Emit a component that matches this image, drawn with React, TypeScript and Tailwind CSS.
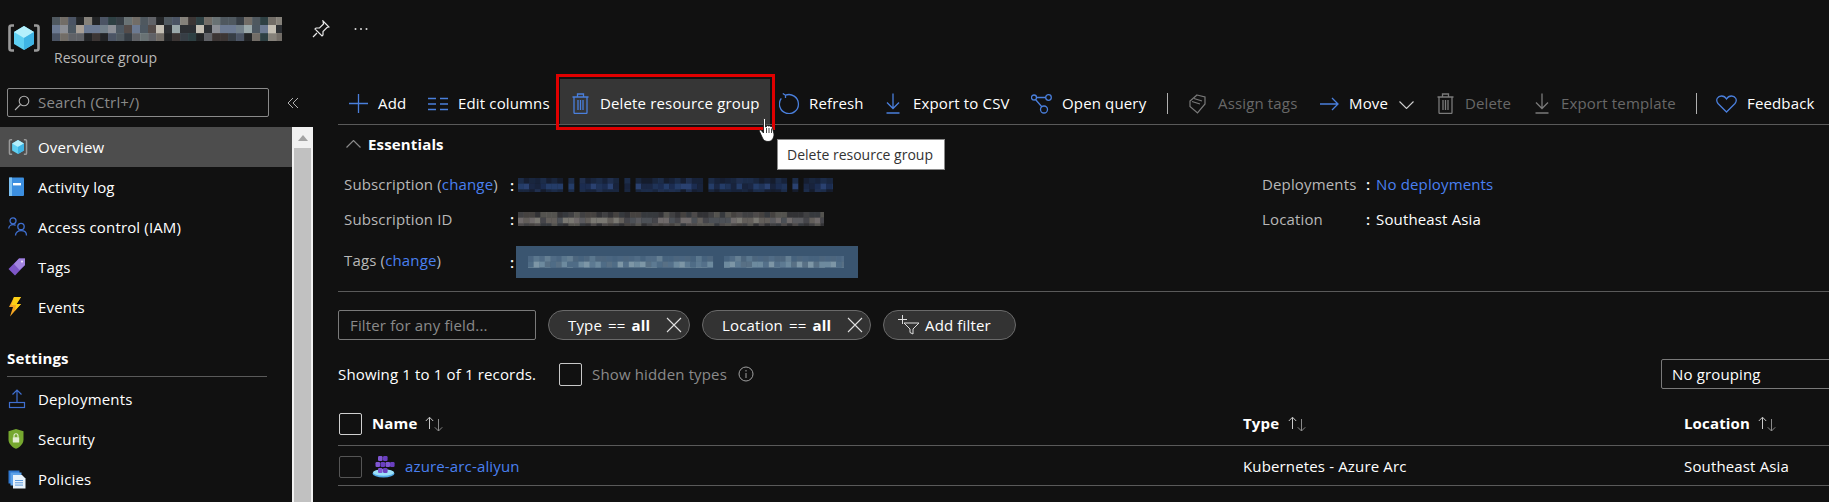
import React from 'react';

const BLUE = '#4a7fdc';
const GREY = '#7a7a7a';

// pixelated area that hides private text in the screenshot
const Mosaic: React.FC<{ w: number; h: number; cell: number; palette: string[]; seed: number; gaps?: number[] }> = ({ w, h, cell, palette, seed, gaps = [] }) => {
  let s = seed;
  const next = () => {
    s = (s * 9301 + 49297) % 233280;
    return s / 233280;
  };
  const rects: React.ReactNode[] = [];
  const cols = Math.ceil(w / cell);
  const rows = Math.ceil(h / cell);
  for (let y = 0; y < rows; y++) {
    for (let x = 0; x < cols; x++) {
      const v = next();
      if (gaps.includes(x)) continue;
      const edge = y === 0 || y === rows - 1;
      rects.push(<rect key={`${x}-${y}`} x={x * cell} y={y * cell} width={cell + 0.3} height={cell + 0.3} fill={palette[Math.floor(v * palette.length)]} opacity={edge ? 0.65 : 1} />);
    }
  }
  return (
    <svg width={w} height={h} className="block shrink-0">
      {rects}
    </svg>
  );
};

const CubeIcon: React.FC<{ size: number }> = ({ size }) => (
  <svg width={size} height={size} viewBox="0 0 34 34" className="block">
    <path d="M7 4.500H4.500a2 2 0 00-2 2v21a2 2 0 002 2H7M27 4.500h2.500a2 2 0 012 2v21a2 2 0 01-2 2H27" fill="none" stroke="#9a9a9a" strokeWidth="2.600" />
    <path d="M17 5l10 6v12l-10 6-10-6V11z" fill="#5fd0f2" />
    <path d="M17 5l10 6-10 6-10-6z" fill="#b4f0fc" />
    <path d="M17 17l10-6v12l-10 6z" fill="#3fb4e4" />
  </svg>
);

const BookIcon = () => (
  <svg width="18" height="20" viewBox="0 0 18 20" className="block">
    <rect x="1" y="0.500" width="15" height="18.500" rx="1" fill="#3c8fe0" />
    <rect x="1" y="0.500" width="3" height="18.500" fill="#7cc0f2" />
    <rect x="5" y="6" width="8" height="2.400" fill="#fff" />
  </svg>
);

const PeopleIcon = () => (
  <svg width="20" height="20" viewBox="0 0 20 20" fill="none" stroke="#3f6fd0" strokeWidth="1.300" className="block">
    <circle cx="5" cy="3.800" r="3" />
    <path d="M0.800 11.500c0-2.500 2-3.800 4.200-3.800 1 0 1.800.2 2.600.7" />
    <circle cx="13" cy="9.500" r="3.200" />
    <path d="M7.500 18.500c0-3 2.400-4.800 5.500-4.800s5.500 1.800 5.500 4.800" />
  </svg>
);

const TagIcon = () => (
  <svg width="18" height="18" viewBox="0 0 18 18" className="block">
    <path d="M11 0.500h6v6.500L7 17.500 0.500 11z" fill="#7e57c8" />
    <path d="M11 0.500h6v6.500L11.500 12 6 6z" fill="#a284e0" />
    <circle cx="14" cy="3.600" r="1.100" fill="#e8e0fa" />
  </svg>
);

const BoltIcon = () => (
  <svg width="14" height="20" viewBox="0 0 14 20" className="block">
    <path d="M6 0h7L8.500 7H13L2 19.500 5 10H1z" fill="#f5a623" />
    <path d="M6 0h7L8.500 7H13L7 13.500 8 8H3.500z" fill="#fcd116" />
  </svg>
);

const UploadIcon = () => (
  <svg width="18" height="20" viewBox="0 0 18 20" fill="none" stroke="#3f6fd0" strokeWidth="1.200" className="block">
    <path d="M9 13V1M4.500 5.500L9 1l4.500 4.500" />
    <rect x="1.500" y="13.500" width="15" height="5" />
  </svg>
);

const ShieldIcon = () => (
  <svg width="16" height="20" viewBox="0 0 16 20" className="block">
    <path d="M8 0l7.500 2.200v8.300C15.500 15 11.500 18.500 8 19.800 4.500 18.500 0.500 15 0.500 10.500V2.200z" fill="#76a82f" />
    <rect x="4.800" y="8.200" width="6.400" height="5.300" rx="0.600" fill="#e4eed2" />
    <path d="M6 8.500V6.800a2 2 0 014 0v1.700" fill="none" stroke="#e4eed2" strokeWidth="1.100" />
  </svg>
);

const PoliciesIcon = () => (
  <svg width="18" height="19" viewBox="0 0 18 19" className="block">
    <rect x="0.500" y="0.500" width="11" height="13" fill="#2f78d0" />
    <rect x="2.500" y="2.500" width="11" height="13" fill="#5ea2e8" />
    <path d="M5 5h9l3.500 3.500V18.500H5z" fill="#e8f2fb" />
    <path d="M7 10.500h8M7 12.800h8M7 15.100h8" stroke="#4c8fd8" strokeWidth="0.900" />
  </svg>
);

const KubeIcon = () => (
  <svg width="23" height="23" viewBox="0 0 23 23" className="block">
    <ellipse cx="11.500" cy="18.500" rx="11" ry="4" fill="#4fa8e8" />
    <ellipse cx="11.500" cy="17.500" rx="10.500" ry="3.200" fill="#9be0f8" />
    {[[6, 1], [11, 1], [3.500, 7], [8.500, 7], [13.500, 7], [18, 7], [6, 13], [11, 13]].map(([x, y], i) => (
      <rect key={i} x={x} y={y} width="4.600" height="5" rx="1.200" fill={i % 2 ? '#6a3fc0' : '#8056d2'} />
    ))}
  </svg>
);

const SortArrows = () => (
  <svg width="20" height="16" viewBox="0 0 20 16" fill="none" strokeWidth="1" className="block">
    <path d="M5.500 13V1.500M1.800 5L5.500 1.200 9.200 5" stroke="#c8c8c8" />
    <path d="M14.500 3v12M10.800 11.300l3.700 3.700 3.700-3.700" stroke="#8a8a8a" />
  </svg>
);

const TrashIcon: React.FC<{ color: string }> = ({ color }) => (
  <svg width="17" height="21" viewBox="0 0 17 21" fill="none" stroke={color} strokeWidth="1.300" className="block">
    <path d="M0.500 4h16M5.500 4V1h6v3M2 4v15.500a1 1 0 001 1h11a1 1 0 001-1V4" />
    <path d="M6 7v10M8.500 7v10M11 7v10" />
  </svg>
);

const DownloadIcon: React.FC<{ color: string }> = ({ color }) => (
  <svg width="14" height="21" viewBox="0 0 14 21" fill="none" stroke={color} strokeWidth="1.300" className="block">
    <path d="M7 0.500V15M1 9.500L7 15.500l6-6M0.500 20h13" />
  </svg>
);

const HandCursor = () => (
  <svg width="16" height="24" viewBox="0 0 16 24" className="block">
    <path d="M4.500 1.500c0-1.300 2-1.300 2 0V9l1-.3V8c.5-.8 1.700-.6 2 .2.500-.6 1.700-.5 2 .3.600-.3 1.600 0 1.800.8L15 16c0 4-2 7.500-6 7.500-3 0-4.500-1.500-5.500-3.500L.500 13.500c-.5-1.200 1-2 1.800-1L4.500 15z" fill="#fff" stroke="#111" strokeWidth="0.800" />
    <path d="M7.500 10v5M10 10v5M12.500 10.500v4.500" stroke="#111" strokeWidth="0.800" />
  </svg>
);

const navTop = [
  { label: 'Overview', icon: <CubeIcon size={20} />, active: true },
  { label: 'Activity log', icon: <BookIcon /> },
  { label: 'Access control (IAM)', icon: <PeopleIcon /> },
  { label: 'Tags', icon: <TagIcon /> },
  { label: 'Events', icon: <BoltIcon /> },
];

const navSettings = [
  { label: 'Deployments', icon: <UploadIcon /> },
  { label: 'Security', icon: <ShieldIcon /> },
  { label: 'Policies', icon: <PoliciesIcon /> },
];

const NavRow: React.FC<{ label: string; icon: React.ReactNode; active?: boolean }> = ({ label, icon, active }) => (
  <div className={`flex h-[40px] items-center shrink-0 pl-[8px] text-white ${active ? 'bg-[#4d4d4d]' : ''}`}>
    <span className="flex w-[30px] shrink-0 items-center">{icon}</span>
    <span className="pt-[1px]">{label}</span>
  </div>
);

const Sidebar = () => (
  <div className="flex h-full w-[338px] shrink-0 flex-col">
    <div className="mt-[14px] flex h-[29px] shrink-0 items-center">
      <div className="ml-[7px] flex h-[29px] w-[262px] items-center rounded-[2px] border border-[#8a8a8a]">
        <svg width="16" height="16" viewBox="0 0 16 16" fill="none" stroke="#b0b0b0" strokeWidth="1.100" className="ml-[6px] block">
          <circle cx="10" cy="6" r="4.800" />
          <path d="M6.500 9.500L1 15" />
        </svg>
        <span className="ml-[8px] text-[#8a8a8a]">Search (Ctrl+/)</span>
      </div>
      <svg width="12" height="12" viewBox="0 0 12 12" fill="none" stroke="#b0b0b0" strokeWidth="1" className="ml-[18px] block">
        <path d="M6 1L1 6l5 5M11 1L6 6l5 5" />
      </svg>
    </div>
    <div className="mt-[10px] flex min-h-0 flex-1">
      <div className="flex w-[292px] shrink-0 flex-col overflow-hidden">
        {navTop.map(n => <NavRow key={n.label} {...n} />)}
        <div className="ml-[7px] mr-[25px] mt-[21px] flex h-[29px] shrink-0 items-center border-b border-[#5a5a5a] pb-[8px] font-bold text-white">Settings</div>
        <div className="h-[2px] shrink-0" />
        {navSettings.map(n => <NavRow key={n.label} {...n} />)}
      </div>
      <div className="flex w-[21px] shrink-0 flex-col bg-[#f1f1f1] px-[2px]">
        <div className="flex h-[21px] items-center justify-center">
          <div className="h-0 w-0 border-x-[5px] border-b-[6px] border-x-transparent border-b-[#a3a3a3]" />
        </div>
        <div className="flex-1 bg-[#c1c1c1]" />
      </div>
    </div>
  </div>
);

const Tool: React.FC<{ label: string; icon: React.ReactNode; width: string; slot: string; disabled?: boolean }> = ({ label, icon, width, slot, disabled }) => (
  <div className={`flex h-full shrink-0 items-center pt-[9px] ${width} ${disabled ? 'text-[#686868]' : 'text-white'}`}>
    <span className={`flex shrink-0 items-center ${slot}`}>{icon}</span>
    <span className="whitespace-nowrap">{label}</span>
  </div>
);

const Sep: React.FC<{ width: string }> = ({ width }) => (
  <div className={`flex h-full shrink-0 items-center pt-[8px] ${width}`}>
    <div className="h-[21px] w-px bg-[#b0b0b0]" />
  </div>
);

const Toolbar = () => (
  <div className="relative flex h-[51px] shrink-0 border-b border-[#5a5a5a]">
    <div className="flex h-[50px] w-[11px] shrink-0" />
    <Tool
      label="Add"
      width="w-[79px]"
      slot="w-[29px]"
      icon={<svg width="19" height="19" viewBox="0 0 19 19" stroke={BLUE} strokeWidth="1.300"><path d="M9.500 0v19M0 9.500h19" /></svg>}
    />
    <Tool
      label="Edit columns"
      width="w-[132px]"
      slot="w-[30px]"
      icon={<svg width="20" height="14" viewBox="0 0 20 14" stroke={BLUE} strokeWidth="1.300"><path d="M0 1.500h8M12 1.500h8M0 7h8M12 7h8M0 12.500h8M12 12.500h8" /></svg>}
    />
    <div className="relative mt-[5px] flex h-[45px] w-[210px] shrink-0 items-center bg-[#363636] pl-[12px] pt-[4px] text-white">
      <span className="flex w-[28px] shrink-0 items-center"><TrashIcon color={BLUE} /></span>
      <span className="whitespace-nowrap">Delete resource group</span>
      <div className="absolute -bottom-[6px] -left-[4px] -right-[5px] -top-[5px] border-[3px] border-[#e00000]" />
    </div>
    <div className="w-[9px] shrink-0" />
    <Tool
      label="Refresh"
      width="w-[107px]"
      slot="w-[30px]"
      icon={<svg width="21" height="21" viewBox="0 0 21 21" fill="none" stroke={BLUE} strokeWidth="1.300"><path d="M6.500 2.200a9.500 9.500 0 11-4.200 3.200M6.500 2.200L3.800 0.500M6.500 2.200V5" /></svg>}
    />
    <Tool label="Export to CSV" width="w-[145px]" slot="w-[27px]" icon={<DownloadIcon color={BLUE} />} />
    <Tool
      label="Open query"
      width="w-[136px]"
      slot="w-[31px]"
      icon={<svg width="21" height="20" viewBox="0 0 21 20" fill="none" stroke={BLUE} strokeWidth="1.300"><circle cx="3" cy="3.500" r="2.500" /><circle cx="17.500" cy="3.500" r="2.800" /><circle cx="13" cy="15.500" r="3.500" /><path d="M5.500 3.500h9.200M4.500 5.500l6.500 7.500" /></svg>}
    />
    <Sep width="w-[22px]" />
    <Tool
      label="Assign tags"
      width="w-[131px]"
      slot="w-[29px]"
      disabled
      icon={<svg width="18" height="20" viewBox="0 0 18 20" fill="none" stroke={GREY} strokeWidth="1.200"><path d="M8 1l8 2v7l-7.500 9L1 12.500V7z" /><path d="M5 4.500l8 2.500M3 7.500l8 2.500" /></svg>}
    />
    <Tool
      label="Move"
      width="w-[79px]"
      slot="w-[29px]"
      icon={<svg width="19" height="14" viewBox="0 0 19 14" fill="none" stroke={BLUE} strokeWidth="1.300"><path d="M0 7h18M12 1l6 6-6 6" /></svg>}
    />
    <svg width="15" height="8" viewBox="0 0 15 8" fill="none" stroke="#d0d0d0" strokeWidth="1.100" className="mb-auto mt-[27px] block shrink-0"><path d="M0.500 0.500l7 7 7-7" /></svg>
    <div className="w-[23px] shrink-0" />
    <Tool label="Delete" width="w-[98px]" slot="w-[28px]" disabled icon={<TrashIcon color={GREY} />} />
    <Tool label="Export template" width="w-[161px]" slot="w-[26px]" disabled icon={<DownloadIcon color={GREY} />} />
    <Sep width="w-[20px]" />
    <Tool
      label="Feedback"
      width="w-[110px]"
      slot="w-[31px]"
      icon={<svg width="21" height="18" viewBox="0 0 21 18" fill="none" stroke={BLUE} strokeWidth="1.300"><path d="M10.500 17L2 8.500C-1 4.500 2 1 5.500 1c2.300 0 4 1.200 5 3 1-1.800 2.700-3 5-3C19 1 22 4.500 19 8.500z" /></svg>}
    />
    <div className="absolute left-[439px] top-[65px] z-10 flex h-[31px] w-[168px] items-center whitespace-nowrap border border-[#8a8a8a] bg-white pl-[9px] text-[14px] tracking-normal text-[#333]">
      Delete resource group
    </div>
    <div className="absolute left-[421px] top-[44px] z-20">
      <HandCursor />
    </div>
  </div>
);

const blueMosaic = ['#1f3358', '#1b2c50', '#243c68', '#1a2744', '#2a4170', '#18233c'];
const greyMosaic = ['#5a5a5e', '#6f6a6a', '#4c5056', '#7a7872', '#45454a', '#625e5a'];
const tagMosaic = ['#5d7a92', '#54708a', '#6d8a9e', '#4f6c86', '#7d96a6', '#587085'];
const titleMosaic = ['#4d5862', '#a89f96', '#72808a', '#c4bfb4', '#2c2f33', '#8c8f96', '#544c4a', '#9aa8aa', '#6c7a92', '#3f5a60'];

const Essentials = () => (
  <div className="h-[167px] shrink-0 border-b border-[#5a5a5a]">
    <div className="flex h-[38px] items-center pl-[8px] font-bold text-white">
      <svg width="15" height="8" viewBox="0 0 15 8" fill="none" stroke="#8a8a8a" strokeWidth="1.200" className="mr-[7px] block"><path d="M0.500 7.500l7-7 7 7" /></svg>
      Essentials
    </div>
    <div className="mt-[5px] flex">
      <div className="w-[924px] shrink-0 pl-[6px] text-[#b8b8b8]">
        <div className="flex h-[34px] items-center">
          <span className="-mt-[1px] w-[166px] shrink-0 whitespace-nowrap">Subscription (<a className="text-[#4a80f0]">change</a>)</span>
          <span className="w-[8px] shrink-0 font-semibold text-white">:</span>
          <Mosaic w={315} h={14} cell={5.600} palette={blueMosaic} seed={7} gaps={[8, 10, 18, 20, 33, 48, 50]} />
        </div>
        <div className="flex h-[34px] items-center">
          <span className="w-[166px] shrink-0 whitespace-nowrap">Subscription ID</span>
          <span className="w-[8px] shrink-0 font-semibold text-white">:</span>
          <Mosaic w={306} h={14} cell={5.600} palette={greyMosaic} seed={23} />
        </div>
        <div className="mt-[10px] flex h-[32px] items-center">
          <span className="-mt-[3px] w-[166px] shrink-0 whitespace-nowrap">Tags (<a className="text-[#4a80f0]">change</a>)</span>
          <span className="w-[8px] shrink-0 font-semibold text-white">:</span>
          <div className="-ml-[2px] flex h-[32px] w-[342px] shrink-0 items-center bg-[#3a5570] pl-[12px]">
            <Mosaic w={316} h={12} cell={5.600} palette={tagMosaic} seed={51} gaps={[33, 34]} />
          </div>
        </div>
      </div>
      <div className="flex-1 text-[#b8b8b8]">
        <div className="-mt-[1px] flex h-[34px] items-center">
          <span className="w-[104px] shrink-0">Deployments</span>
          <span className="w-[10px] shrink-0 font-semibold text-white">:</span>
          <a className="text-[#4a80f0]">No deployments</a>
        </div>
        <div className="mt-[1px] flex h-[34px] items-center">
          <span className="w-[104px] shrink-0">Location</span>
          <span className="w-[10px] shrink-0 font-semibold text-white">:</span>
          <span className="text-white">Southeast Asia</span>
        </div>
      </div>
    </div>
  </div>
);

const Pill: React.FC<{ name: string; width: string }> = ({ name, width }) => (
  <div className={`flex h-[30px] shrink-0 items-center justify-between rounded-full border border-[#6a6a6a] bg-[#333] pl-[19px] pr-[5px] text-white ${width}`}>
    <span className="whitespace-nowrap">{name} <span className="mx-[2px]">==</span> <b>all</b></span>
    <svg width="16" height="16" viewBox="0 0 16 16" stroke="#e0e0e0" strokeWidth="1.100" className="mr-[2px]"><path d="M1 1l14 14M15 1L1 15" /></svg>
  </div>
);

const Filters = () => (
  <div className="mt-[18px] flex h-[30px] shrink-0 items-center">
    <div className="flex h-[30px] w-[198px] shrink-0 items-center rounded-[2px] border border-[#7a7a7a] pl-[11px] text-[#8a8a8a]">Filter for any field...</div>
    <div className="w-[12px] shrink-0" />
    <Pill name="Type" width="w-[142px]" />
    <div className="w-[12px] shrink-0" />
    <Pill name="Location" width="w-[169px]" />
    <div className="w-[12px] shrink-0" />
    <div className="flex h-[30px] w-[133px] shrink-0 items-center rounded-full border border-[#6a6a6a] bg-[#333] pl-[14px] text-white">
      <svg width="22" height="20" viewBox="0 0 22 20" fill="none" stroke="#e0e0e0" strokeWidth="1" className="mr-[5px] block">
        <path d="M4.500 0v9M0 4.500h9M6 8h15l-6 6v5l-3-1.500V14z" />
      </svg>
      Add filter
    </div>
  </div>
);

const Records = () => (
  <div className="mt-[19px] flex h-[30px] shrink-0 items-center text-white">
    <span className="w-[221px] shrink-0 whitespace-nowrap">Showing 1 to 1 of 1 records.</span>
    <div className="h-[23px] w-[23px] shrink-0 rounded-[2px] border border-[#c8c8c8]" />
    <span className="ml-[10px] whitespace-nowrap text-[#8a8a8a]">Show hidden types</span>
    <svg width="16" height="16" viewBox="0 0 16 16" fill="none" stroke="#a0a0a0" strokeWidth="1" className="ml-[11px] block">
      <circle cx="8" cy="8" r="7" />
      <path d="M8 4v1.500M8 7v5" />
    </svg>
    <div className="-mr-[20px] ml-auto flex h-[30px] w-[188px] shrink-0 items-center rounded-[2px] border border-[#7a7a7a] pl-[10px]">No grouping</div>
  </div>
);

const ResourceTable = () => (
  <div className="-ml-[6px] mt-[13px] text-white">
    <div className="grid h-[44px] grid-cols-[911px_441px_1fr] items-center border-b border-[#5a5a5a] font-bold">
      <div className="flex items-center pl-[7px]">
        <div className="mr-[10px] h-[22px] w-[23px] rounded-[2px] border border-[#d0d0d0]" />
        Name
        <span className="ml-[7px]"><SortArrows /></span>
      </div>
      <div className="flex items-center">Type<span className="ml-[8px]"><SortArrows /></span></div>
      <div className="flex items-center">Location<span className="ml-[7px]"><SortArrows /></span></div>
    </div>
    <div className="grid h-[40px] grid-cols-[911px_441px_1fr] items-center border-b border-[#5a5a5a] pt-[2px]">
      <div className="flex items-center pl-[7px]">
        <div className="mr-[10px] h-[22px] w-[23px] rounded-[2px] border border-[#555]" />
        <KubeIcon />
        <a className="ml-[10px] text-[#4a80f0]">azure-arc-aliyun</a>
      </div>
      <div>Kubernetes - Azure Arc</div>
      <div>Southeast Asia</div>
    </div>
  </div>
);

export default function App() {
  return (
    <div className="flex h-[502px] w-[1829px] flex-col overflow-hidden bg-[#111111] text-[15px] tracking-[0.15px] font-['Open_Sans',sans-serif]">
      <div className="relative flex h-[74px] shrink-0">
        <div className="ml-[7px] mt-[21px]"><CubeIcon size={34} /></div>
        <div className="ml-[11px] mt-[17px]">
          <Mosaic w={230} h={24} cell={8} palette={titleMosaic} seed={101} />
          <div className="ml-[2px] mt-[6px] text-[14px] tracking-normal text-[#b8b8b8]">Resource group</div>
        </div>
        <svg width="18" height="18" viewBox="0 0 18 18" fill="none" stroke="#e8e8e8" strokeWidth="1.200" className="ml-[30px] mt-[20px] block">
          <path d="M11 1l6 6-2 .5-4 4 0 3.500-1 1-7-7 1-1 3.500 0 4-4zM5 13l-4 4" />
        </svg>
        <svg width="14" height="4" viewBox="0 0 14 4" fill="#d8d8d8" className="ml-[24px] mt-[27px] block">
          <circle cx="1.500" cy="2" r="1" /><circle cx="7" cy="2" r="1" /><circle cx="12.500" cy="2" r="1" />
        </svg>
      </div>
      <div className="flex min-h-0 flex-1">
        <Sidebar />
        <div className="flex min-w-0 flex-1 flex-col overflow-hidden">
          <Toolbar />
          <Essentials />
          <Filters />
          <Records />
          <ResourceTable />
        </div>
      </div>
    </div>
  );
}
